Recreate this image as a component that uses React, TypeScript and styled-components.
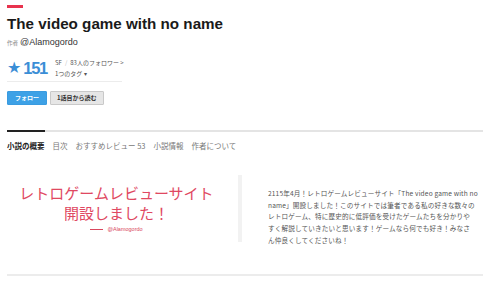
import React from "react";
import styled, { createGlobalStyle } from "styled-components";

const GlobalStyle = createGlobalStyle`
  html, body { margin: 0; padding: 0; background: #fff; }
  body {
    font-family: "Liberation Sans", "Noto Sans CJK JP", Arial, sans-serif;
    color: #222;
  }
`;

const Page = styled.div`
  width: 490px;
  height: 286px;
  box-sizing: border-box;
  padding: 5px 7px 0;
  overflow: hidden;
`;

const AccentBar = styled.div`
  width: 16px;
  height: 3px;
  background: #e8334e;
`;

const Title = styled.h1`
  margin: 6px 0 0;
  font-size: 15.2px;
  line-height: 20px;
  font-weight: bold;
  color: #1a1a1a;
`;

const AuthorLine = styled.div`
  display: flex;
  align-items: baseline;
  gap: 2px;
  margin-top: 2px;
  line-height: 12px;
`;

const AuthorLabel = styled.span`
  font-size: 5.5px;
  color: #888;
  font-family: "Noto Sans CJK JP", sans-serif;
`;

const AuthorName = styled.span`
  font-size: 9px;
  color: #333;
`;

const StatsRow = styled.div`
  display: flex;
  align-items: center;
  gap: 8px;
  width: 115px;
  margin-top: 9px;
  padding-bottom: 3px;
  border-bottom: 1px solid #ececec;
`;

const Rating = styled.div`
  display: flex;
  align-items: center;
  color: #3b8ed6;
  font-weight: bold;
  font-size: 16.5px;
  letter-spacing: -1.3px;
  line-height: 20px;
`;

const Star = styled.span`
  font-size: 16px;
  margin-right: 2px;
  letter-spacing: 0;
  font-family: "DejaVu Sans", sans-serif;
`;

const Meta = styled.div`
  display: flex;
  flex-direction: column;
  gap: 2px;
  font-family: "Noto Sans CJK JP", sans-serif;
  font-size: 6px;
  line-height: 9px;
  color: #555;
`;

const MetaLine = styled.div`
  display: flex;
  gap: 3px;
  white-space: nowrap;
`;

const Sep = styled.span`
  color: #bbb;
`;

const ButtonRow = styled.div`
  display: flex;
  gap: 3px;
  margin-top: 9px;
`;

const Button = styled.button<{ $primary?: boolean }>`
  height: 14px;
  padding: 0 ${(p) => (p.$primary ? "7px" : "6px")};
  font-family: "Noto Sans CJK JP", sans-serif;
  font-size: 6px;
  font-weight: bold;
  line-height: 12px;
  border-radius: 1px;
  border: 1px solid ${(p) => (p.$primary ? "#3a9be0" : "#c9c9c9")};
  background: ${(p) => (p.$primary ? "#3da1e6" : "#e6e6e6")};
  color: ${(p) => (p.$primary ? "#fff" : "#333")};
  cursor: pointer;
`;

const Tabs = styled.nav`
  display: flex;
  gap: 8px;
  margin-top: 25px;
  border-top: 2px solid #e4e4e4;
  width: 476px;
`;

const Tab = styled.span<{ $active?: boolean }>`
  position: relative;
  padding-top: 8px;
  font-family: "Noto Sans CJK JP", sans-serif;
  font-size: 7.5px;
  line-height: 12px;
  font-weight: ${(p) => (p.$active ? "bold" : "normal")};
  color: ${(p) => (p.$active ? "#222" : "#777")};
  white-space: nowrap;
  &::before {
    content: "";
    display: ${(p) => (p.$active ? "block" : "none")};
    position: absolute;
    left: 0;
    right: 0;
    top: -2px;
    height: 2px;
    background: #222;
  }
`;

const Content = styled.section`
  display: grid;
  grid-template-columns: 231px 4px 1fr;
  margin-top: 23px;
  width: 476px;
  padding-bottom: 27px;
  border-bottom: 2px solid #ececec;
`;

const Catch = styled.div`
  display: flex;
  flex-direction: column;
  align-items: center;
  padding: 8px 12px 0 0;
  font-family: "Noto Sans CJK JP", sans-serif;
  color: #e04862;
`;

const CatchText = styled.div`
  font-size: 15px;
  line-height: 20px;
  text-align: center;
`;

const Signature = styled.div`
  margin-top: 2px;
  font-size: 5.5px;
  line-height: 8px;
  color: #d9475e;
  display: flex;
  align-items: center;
  gap: 4px;
  font-family: "Liberation Sans", sans-serif;
`;

const Dash = styled.span`
  display: inline-block;
  width: 13px;
  height: 1px;
  background: #d9475e;
`;

const Divider = styled.div`
  width: 4px;
  height: 67px;
  background: #f2f2f2;
`;

const Intro = styled.p`
  margin: 13px 0 0 26px;
  width: 212px;
  white-space: nowrap;
  font-family: "Noto Sans CJK JP", sans-serif;
  font-size: 6.6px;
  letter-spacing: 0.15px;
  line-height: 11.7px;
  color: #555;
`;

export default function App() {
  return (
    <>
      <GlobalStyle />
      <Page>
        <AccentBar />
        <Title>The video game with no name</Title>
        <AuthorLine>
          <AuthorLabel>作者</AuthorLabel>
          <AuthorName>@Alamogordo</AuthorName>
        </AuthorLine>
        <StatsRow>
          <Rating>
            <Star>★</Star>151
          </Rating>
          <Meta>
            <MetaLine>
              <span>SF</span>
              <Sep>/</Sep>
              <span>83人のフォロワー &gt;</span>
            </MetaLine>
            <MetaLine>
              <span>1つのタグ ▾</span>
            </MetaLine>
          </Meta>
        </StatsRow>
        <ButtonRow>
          <Button $primary>フォロー</Button>
          <Button>1話目から読む</Button>
        </ButtonRow>
        <Tabs>
          <Tab $active>小説の概要</Tab>
          <Tab>目次</Tab>
          <Tab>おすすめレビュー 53</Tab>
          <Tab>小説情報</Tab>
          <Tab>作者について</Tab>
        </Tabs>
        <Content>
          <Catch>
            <CatchText>
              レトロゲームレビューサイト
              <br />
              開設しました！
            </CatchText>
            <Signature>
              <Dash />
              @Alamogordo
            </Signature>
          </Catch>
          <Divider />
          <Intro>
            2115年4月！レトロゲームレビューサイト「The video game with no
            <br />
            name」開設しました！このサイトでは筆者である私の好きな数々の
            <br />
            レトロゲーム、特に歴史的に低評価を受けたゲームたちを分かりや
            <br />
            すく解説していきたいと思います！ゲームなら何でも好き！みなさ
            <br />
            ん仲良くしてくださいね！
          </Intro>
        </Content>
      </Page>
    </>
  );
}
